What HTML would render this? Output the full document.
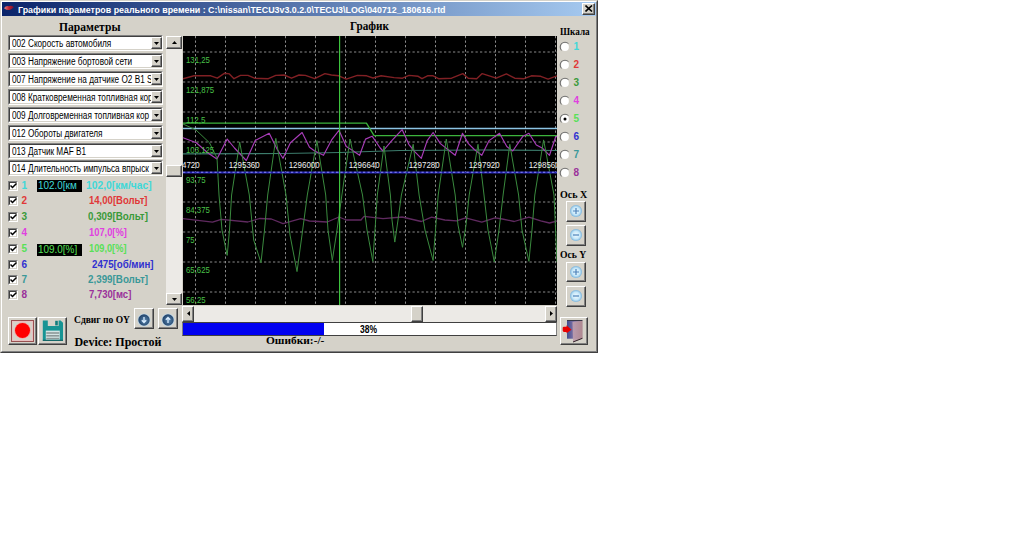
<!DOCTYPE html><html><head><meta charset="utf-8"><style>html,body{margin:0;padding:0;background:#fff;width:1024px;height:543px;overflow:hidden;position:relative;font-family:"Liberation Sans",sans-serif;}</style></head><body>
<div style="position:absolute;left:0;top:0;width:598px;height:353px;background:#d5d2c9;box-sizing:border-box;border-top:1px solid #d5d2c9;border-left:1px solid #d5d2c9;border-right:1px solid #404040;border-bottom:1px solid #404040;"><div style="position:absolute;left:0;top:0;right:0;bottom:0;border-top:1px solid #fff;border-left:1px solid #fff;border-right:1px solid #808080;border-bottom:1px solid #808080;"></div></div>
<div style="position:absolute;left:2px;top:2px;width:594px;height:14px;background:linear-gradient(to right,#0a246a,#a6caf0);"></div>
<svg style="position:absolute;left:0px;top:0px" width="16" height="16" viewBox="0 0 16 16"><defs><linearGradient id="tig" x1="0" x2="1"><stop offset="0" stop-color="#e88888"/><stop offset="0.5" stop-color="#c02030"/><stop offset="1" stop-color="#701030"/></linearGradient></defs><path d="M4 8.2 Q6 5.2 9 6.2 Q11.5 5.2 14 7.2 Q11.5 9.2 9.5 10 Q6.5 10.3 4 8.2 Z" fill="url(#tig)"/></svg>
<div style="position:absolute;left:18.3px;top:5.6px;white-space:pre;font:bold 9px 'Liberation Sans';line-height:1;color:#fff;transform:scaleX(0.9847961299239806);transform-origin:0 0;">Графики параметров реального времени : C:\nissan\TECU3v3.0.2.0\TECU3\LOG\040712_180616.rtd</div>
<div style="position:absolute;left:582px;top:3px;width:13px;height:12px;background:#d5d2c9;box-sizing:border-box;border-top:1px solid #fff;border-left:1px solid #fff;border-right:1px solid #404040;border-bottom:1px solid #404040;"><div style="position:absolute;left:0;top:0;right:0;bottom:0;border-right:1px solid #808080;border-bottom:1px solid #808080;"></div></div>
<svg style="position:absolute;left:585px;top:5px" width="8" height="7" viewBox="0 0 8 7"><path d="M0.5 0.5 L7 6.5 M7 0.5 L0.5 6.5" stroke="#000" stroke-width="1.6"/></svg>
<div style="position:absolute;left:59px;top:21.5px;white-space:pre;font:bold 11.5px 'Liberation Serif';line-height:1;color:#000;transform:scaleX(1.0081967213114753);transform-origin:0 0;">Параметры</div>
<div style="position:absolute;left:350.3px;top:21.2px;white-space:pre;font:bold 11.5px 'Liberation Serif';line-height:1;color:#000;transform:scaleX(0.975);transform-origin:0 0;">График</div>
<div style="position:absolute;left:560px;top:26px;white-space:pre;font:bold 11px 'Liberation Serif';line-height:1;color:#000;transform:scaleX(0.8338028169014085);transform-origin:0 0;">Шкала</div>
<div style="position:absolute;left:8px;top:35px;width:155px;height:16px;background:#fff;box-sizing:border-box;border-top:1px solid #808080;border-left:1px solid #808080;border-right:1px solid #fff;border-bottom:1px solid #fff;"><div style="position:absolute;left:0;top:0;right:0;bottom:0;border-top:1px solid #404040;border-left:1px solid #404040;border-right:1px solid #d5d2c9;border-bottom:1px solid #d5d2c9;"></div></div>
<div style="position:absolute;left:10px;top:37px;width:141px;height:12px;overflow:hidden;"><div style="position:absolute;left:2px;top:1.5px;white-space:pre;font:10px 'Liberation Sans';line-height:1;color:#000;transform:scaleX(0.82);transform-origin:0 0;">002 Скорость автомобиля</div></div>
<div style="position:absolute;left:151px;top:37px;width:11px;height:12px;background:#d5d2c9;box-sizing:border-box;border-top:1px solid #fff;border-left:1px solid #fff;border-right:1px solid #404040;border-bottom:1px solid #404040;"><div style="position:absolute;left:0;top:0;right:0;bottom:0;border-right:1px solid #808080;border-bottom:1px solid #808080;"></div></div>
<svg style="position:absolute;left:154px;top:41.5px" width="5" height="3" viewBox="0 0 5 3"><path d="M0 0 H5 L2.5 3 Z" fill="#000"/></svg>
<div style="position:absolute;left:8px;top:53px;width:155px;height:16px;background:#fff;box-sizing:border-box;border-top:1px solid #808080;border-left:1px solid #808080;border-right:1px solid #fff;border-bottom:1px solid #fff;"><div style="position:absolute;left:0;top:0;right:0;bottom:0;border-top:1px solid #404040;border-left:1px solid #404040;border-right:1px solid #d5d2c9;border-bottom:1px solid #d5d2c9;"></div></div>
<div style="position:absolute;left:10px;top:55px;width:141px;height:12px;overflow:hidden;"><div style="position:absolute;left:2px;top:1.5px;white-space:pre;font:10px 'Liberation Sans';line-height:1;color:#000;transform:scaleX(0.82);transform-origin:0 0;">003 Напряжение бортовой сети</div></div>
<div style="position:absolute;left:151px;top:55px;width:11px;height:12px;background:#d5d2c9;box-sizing:border-box;border-top:1px solid #fff;border-left:1px solid #fff;border-right:1px solid #404040;border-bottom:1px solid #404040;"><div style="position:absolute;left:0;top:0;right:0;bottom:0;border-right:1px solid #808080;border-bottom:1px solid #808080;"></div></div>
<svg style="position:absolute;left:154px;top:59.5px" width="5" height="3" viewBox="0 0 5 3"><path d="M0 0 H5 L2.5 3 Z" fill="#000"/></svg>
<div style="position:absolute;left:8px;top:71px;width:155px;height:16px;background:#fff;box-sizing:border-box;border-top:1px solid #808080;border-left:1px solid #808080;border-right:1px solid #fff;border-bottom:1px solid #fff;"><div style="position:absolute;left:0;top:0;right:0;bottom:0;border-top:1px solid #404040;border-left:1px solid #404040;border-right:1px solid #d5d2c9;border-bottom:1px solid #d5d2c9;"></div></div>
<div style="position:absolute;left:10px;top:73px;width:141px;height:12px;overflow:hidden;"><div style="position:absolute;left:2px;top:1.5px;white-space:pre;font:10px 'Liberation Sans';line-height:1;color:#000;transform:scaleX(0.82);transform-origin:0 0;">007 Напряжение на датчике O2 B1 S</div></div>
<div style="position:absolute;left:151px;top:73px;width:11px;height:12px;background:#d5d2c9;box-sizing:border-box;border-top:1px solid #fff;border-left:1px solid #fff;border-right:1px solid #404040;border-bottom:1px solid #404040;"><div style="position:absolute;left:0;top:0;right:0;bottom:0;border-right:1px solid #808080;border-bottom:1px solid #808080;"></div></div>
<svg style="position:absolute;left:154px;top:77.5px" width="5" height="3" viewBox="0 0 5 3"><path d="M0 0 H5 L2.5 3 Z" fill="#000"/></svg>
<div style="position:absolute;left:8px;top:89px;width:155px;height:16px;background:#fff;box-sizing:border-box;border-top:1px solid #808080;border-left:1px solid #808080;border-right:1px solid #fff;border-bottom:1px solid #fff;"><div style="position:absolute;left:0;top:0;right:0;bottom:0;border-top:1px solid #404040;border-left:1px solid #404040;border-right:1px solid #d5d2c9;border-bottom:1px solid #d5d2c9;"></div></div>
<div style="position:absolute;left:10px;top:91px;width:141px;height:12px;overflow:hidden;"><div style="position:absolute;left:2px;top:1.5px;white-space:pre;font:10px 'Liberation Sans';line-height:1;color:#000;transform:scaleX(0.82);transform-origin:0 0;">008 Кратковременная топливная кор</div></div>
<div style="position:absolute;left:151px;top:91px;width:11px;height:12px;background:#d5d2c9;box-sizing:border-box;border-top:1px solid #fff;border-left:1px solid #fff;border-right:1px solid #404040;border-bottom:1px solid #404040;"><div style="position:absolute;left:0;top:0;right:0;bottom:0;border-right:1px solid #808080;border-bottom:1px solid #808080;"></div></div>
<svg style="position:absolute;left:154px;top:95.5px" width="5" height="3" viewBox="0 0 5 3"><path d="M0 0 H5 L2.5 3 Z" fill="#000"/></svg>
<div style="position:absolute;left:8px;top:107px;width:155px;height:16px;background:#fff;box-sizing:border-box;border-top:1px solid #808080;border-left:1px solid #808080;border-right:1px solid #fff;border-bottom:1px solid #fff;"><div style="position:absolute;left:0;top:0;right:0;bottom:0;border-top:1px solid #404040;border-left:1px solid #404040;border-right:1px solid #d5d2c9;border-bottom:1px solid #d5d2c9;"></div></div>
<div style="position:absolute;left:10px;top:109px;width:141px;height:12px;overflow:hidden;"><div style="position:absolute;left:2px;top:1.5px;white-space:pre;font:10px 'Liberation Sans';line-height:1;color:#000;transform:scaleX(0.82);transform-origin:0 0;">009 Долговременная топливная кор</div></div>
<div style="position:absolute;left:151px;top:109px;width:11px;height:12px;background:#d5d2c9;box-sizing:border-box;border-top:1px solid #fff;border-left:1px solid #fff;border-right:1px solid #404040;border-bottom:1px solid #404040;"><div style="position:absolute;left:0;top:0;right:0;bottom:0;border-right:1px solid #808080;border-bottom:1px solid #808080;"></div></div>
<svg style="position:absolute;left:154px;top:113.5px" width="5" height="3" viewBox="0 0 5 3"><path d="M0 0 H5 L2.5 3 Z" fill="#000"/></svg>
<div style="position:absolute;left:8px;top:125px;width:155px;height:16px;background:#fff;box-sizing:border-box;border-top:1px solid #808080;border-left:1px solid #808080;border-right:1px solid #fff;border-bottom:1px solid #fff;"><div style="position:absolute;left:0;top:0;right:0;bottom:0;border-top:1px solid #404040;border-left:1px solid #404040;border-right:1px solid #d5d2c9;border-bottom:1px solid #d5d2c9;"></div></div>
<div style="position:absolute;left:10px;top:127px;width:141px;height:12px;overflow:hidden;"><div style="position:absolute;left:2px;top:1.5px;white-space:pre;font:10px 'Liberation Sans';line-height:1;color:#000;transform:scaleX(0.82);transform-origin:0 0;">012 Обороты двигателя</div></div>
<div style="position:absolute;left:151px;top:127px;width:11px;height:12px;background:#d5d2c9;box-sizing:border-box;border-top:1px solid #fff;border-left:1px solid #fff;border-right:1px solid #404040;border-bottom:1px solid #404040;"><div style="position:absolute;left:0;top:0;right:0;bottom:0;border-right:1px solid #808080;border-bottom:1px solid #808080;"></div></div>
<svg style="position:absolute;left:154px;top:131.5px" width="5" height="3" viewBox="0 0 5 3"><path d="M0 0 H5 L2.5 3 Z" fill="#000"/></svg>
<div style="position:absolute;left:8px;top:143px;width:155px;height:16px;background:#fff;box-sizing:border-box;border-top:1px solid #808080;border-left:1px solid #808080;border-right:1px solid #fff;border-bottom:1px solid #fff;"><div style="position:absolute;left:0;top:0;right:0;bottom:0;border-top:1px solid #404040;border-left:1px solid #404040;border-right:1px solid #d5d2c9;border-bottom:1px solid #d5d2c9;"></div></div>
<div style="position:absolute;left:10px;top:145px;width:141px;height:12px;overflow:hidden;"><div style="position:absolute;left:2px;top:1.5px;white-space:pre;font:10px 'Liberation Sans';line-height:1;color:#000;transform:scaleX(0.82);transform-origin:0 0;">013 Датчик MAF B1</div></div>
<div style="position:absolute;left:151px;top:145px;width:11px;height:12px;background:#d5d2c9;box-sizing:border-box;border-top:1px solid #fff;border-left:1px solid #fff;border-right:1px solid #404040;border-bottom:1px solid #404040;"><div style="position:absolute;left:0;top:0;right:0;bottom:0;border-right:1px solid #808080;border-bottom:1px solid #808080;"></div></div>
<svg style="position:absolute;left:154px;top:149.5px" width="5" height="3" viewBox="0 0 5 3"><path d="M0 0 H5 L2.5 3 Z" fill="#000"/></svg>
<div style="position:absolute;left:8px;top:160px;width:155px;height:16px;background:#fff;box-sizing:border-box;border-top:1px solid #808080;border-left:1px solid #808080;border-right:1px solid #fff;border-bottom:1px solid #fff;"><div style="position:absolute;left:0;top:0;right:0;bottom:0;border-top:1px solid #404040;border-left:1px solid #404040;border-right:1px solid #d5d2c9;border-bottom:1px solid #d5d2c9;"></div></div>
<div style="position:absolute;left:10px;top:162px;width:141px;height:12px;overflow:hidden;"><div style="position:absolute;left:2px;top:1.5px;white-space:pre;font:10px 'Liberation Sans';line-height:1;color:#000;transform:scaleX(0.82);transform-origin:0 0;">014 Длительность импульса впрыск</div></div>
<div style="position:absolute;left:151px;top:162px;width:11px;height:12px;background:#d5d2c9;box-sizing:border-box;border-top:1px solid #fff;border-left:1px solid #fff;border-right:1px solid #404040;border-bottom:1px solid #404040;"><div style="position:absolute;left:0;top:0;right:0;bottom:0;border-right:1px solid #808080;border-bottom:1px solid #808080;"></div></div>
<svg style="position:absolute;left:154px;top:166.5px" width="5" height="3" viewBox="0 0 5 3"><path d="M0 0 H5 L2.5 3 Z" fill="#000"/></svg>
<div style="position:absolute;left:166px;top:36px;width:16px;height:269px;background:#eceae6;"></div>
<div style="position:absolute;left:166px;top:36px;width:16px;height:13px;background:#d5d2c9;box-sizing:border-box;border-top:1px solid #fff;border-left:1px solid #fff;border-right:1px solid #404040;border-bottom:1px solid #404040;"><div style="position:absolute;left:0;top:0;right:0;bottom:0;border-right:1px solid #808080;border-bottom:1px solid #808080;"></div></div>
<svg style="position:absolute;left:171.5px;top:41px" width="5" height="3" viewBox="0 0 5 3"><path d="M0 3 H5 L2.5 0 Z" fill="#000"/></svg>
<div style="position:absolute;left:166px;top:165px;width:16px;height:12px;background:#d5d2c9;box-sizing:border-box;border-top:1px solid #fff;border-left:1px solid #fff;border-right:1px solid #404040;border-bottom:1px solid #404040;"><div style="position:absolute;left:0;top:0;right:0;bottom:0;border-right:1px solid #808080;border-bottom:1px solid #808080;"></div></div>
<div style="position:absolute;left:166px;top:293px;width:16px;height:12px;background:#d5d2c9;box-sizing:border-box;border-top:1px solid #fff;border-left:1px solid #fff;border-right:1px solid #404040;border-bottom:1px solid #404040;"><div style="position:absolute;left:0;top:0;right:0;bottom:0;border-right:1px solid #808080;border-bottom:1px solid #808080;"></div></div>
<svg style="position:absolute;left:171.5px;top:298px" width="5" height="3" viewBox="0 0 5 3"><path d="M0 0 H5 L2.5 3 Z" fill="#000"/></svg>
<div style="position:absolute;left:8px;top:181px;width:10px;height:10px;background:#fff;box-sizing:border-box;border-top:1px solid #808080;border-left:1px solid #808080;border-right:1px solid #fff;border-bottom:1px solid #fff;"><div style="position:absolute;left:0;top:0;right:0;bottom:0;border-top:1px solid #404040;border-left:1px solid #404040;border-right:1px solid #d5d2c9;border-bottom:1px solid #d5d2c9;"></div></div>
<svg style="position:absolute;left:10px;top:183px" width="7" height="6" viewBox="0 0 7 6"><path d="M0.5 2.5 L2.5 4.5 L6.5 0.5" stroke="#000" stroke-width="1.5" fill="none"/></svg>
<div style="position:absolute;left:21.5px;top:180.8px;white-space:pre;font:bold 10px 'Liberation Sans';line-height:1;color:#40d8d8;">1</div>
<div style="position:absolute;left:37px;top:180px;width:45px;height:12px;background:#000;"></div>
<div style="position:absolute;left:38px;top:181px;white-space:pre;font:10px 'Liberation Sans';line-height:1;color:#40d8d8;transform:scaleX(0.9923664122137406);transform-origin:0 0;">102.0[км</div>
<div style="position:absolute;left:86.1px;top:180.8px;white-space:pre;font:bold 10px 'Liberation Sans';line-height:1;color:#40d8d8;transform:scaleX(1.0282131661442009);transform-origin:0 0;">102,0[км/час]</div>
<div style="position:absolute;left:8px;top:196px;width:10px;height:10px;background:#fff;box-sizing:border-box;border-top:1px solid #808080;border-left:1px solid #808080;border-right:1px solid #fff;border-bottom:1px solid #fff;"><div style="position:absolute;left:0;top:0;right:0;bottom:0;border-top:1px solid #404040;border-left:1px solid #404040;border-right:1px solid #d5d2c9;border-bottom:1px solid #d5d2c9;"></div></div>
<svg style="position:absolute;left:10px;top:198px" width="7" height="6" viewBox="0 0 7 6"><path d="M0.5 2.5 L2.5 4.5 L6.5 0.5" stroke="#000" stroke-width="1.5" fill="none"/></svg>
<div style="position:absolute;left:21.5px;top:196.3px;white-space:pre;font:bold 10px 'Liberation Sans';line-height:1;color:#e03838;">2</div>
<div style="position:absolute;left:88.7px;top:196.3px;white-space:pre;font:bold 10px 'Liberation Sans';line-height:1;color:#e03838;transform:scaleX(0.9543230016313214);transform-origin:0 0;">14,00[Вольт]</div>
<div style="position:absolute;left:8px;top:212px;width:10px;height:10px;background:#fff;box-sizing:border-box;border-top:1px solid #808080;border-left:1px solid #808080;border-right:1px solid #fff;border-bottom:1px solid #fff;"><div style="position:absolute;left:0;top:0;right:0;bottom:0;border-top:1px solid #404040;border-left:1px solid #404040;border-right:1px solid #d5d2c9;border-bottom:1px solid #d5d2c9;"></div></div>
<svg style="position:absolute;left:10px;top:214px" width="7" height="6" viewBox="0 0 7 6"><path d="M0.5 2.5 L2.5 4.5 L6.5 0.5" stroke="#000" stroke-width="1.5" fill="none"/></svg>
<div style="position:absolute;left:21.5px;top:211.8px;white-space:pre;font:bold 10px 'Liberation Sans';line-height:1;color:#3a9a3a;">3</div>
<div style="position:absolute;left:88.0px;top:211.8px;white-space:pre;font:bold 10px 'Liberation Sans';line-height:1;color:#3a9a3a;transform:scaleX(0.9771615008156606);transform-origin:0 0;">0,309[Вольт]</div>
<div style="position:absolute;left:8px;top:228px;width:10px;height:10px;background:#fff;box-sizing:border-box;border-top:1px solid #808080;border-left:1px solid #808080;border-right:1px solid #fff;border-bottom:1px solid #fff;"><div style="position:absolute;left:0;top:0;right:0;bottom:0;border-top:1px solid #404040;border-left:1px solid #404040;border-right:1px solid #d5d2c9;border-bottom:1px solid #d5d2c9;"></div></div>
<svg style="position:absolute;left:10px;top:230px" width="7" height="6" viewBox="0 0 7 6"><path d="M0.5 2.5 L2.5 4.5 L6.5 0.5" stroke="#000" stroke-width="1.5" fill="none"/></svg>
<div style="position:absolute;left:21.5px;top:227.8px;white-space:pre;font:bold 10px 'Liberation Sans';line-height:1;color:#e040e0;">4</div>
<div style="position:absolute;left:88.7px;top:227.8px;white-space:pre;font:bold 10px 'Liberation Sans';line-height:1;color:#e040e0;transform:scaleX(0.933497536945813);transform-origin:0 0;">107,0[%]</div>
<div style="position:absolute;left:8px;top:244px;width:10px;height:10px;background:#fff;box-sizing:border-box;border-top:1px solid #808080;border-left:1px solid #808080;border-right:1px solid #fff;border-bottom:1px solid #fff;"><div style="position:absolute;left:0;top:0;right:0;bottom:0;border-top:1px solid #404040;border-left:1px solid #404040;border-right:1px solid #d5d2c9;border-bottom:1px solid #d5d2c9;"></div></div>
<svg style="position:absolute;left:10px;top:246px" width="7" height="6" viewBox="0 0 7 6"><path d="M0.5 2.5 L2.5 4.5 L6.5 0.5" stroke="#000" stroke-width="1.5" fill="none"/></svg>
<div style="position:absolute;left:21.5px;top:244.3px;white-space:pre;font:bold 10px 'Liberation Sans';line-height:1;color:#58e058;">5</div>
<div style="position:absolute;left:37px;top:244px;width:45px;height:12px;background:#000;"></div>
<div style="position:absolute;left:38px;top:244.5px;white-space:pre;font:10px 'Liberation Sans';line-height:1;color:#58e058;transform:scaleX(0.9923664122137406);transform-origin:0 0;">109.0[%]</div>
<div style="position:absolute;left:89.0px;top:244.3px;white-space:pre;font:bold 10px 'Liberation Sans';line-height:1;color:#58e058;transform:scaleX(0.9236453201970443);transform-origin:0 0;">109,0[%]</div>
<div style="position:absolute;left:8px;top:260px;width:10px;height:10px;background:#fff;box-sizing:border-box;border-top:1px solid #808080;border-left:1px solid #808080;border-right:1px solid #fff;border-bottom:1px solid #fff;"><div style="position:absolute;left:0;top:0;right:0;bottom:0;border-top:1px solid #404040;border-left:1px solid #404040;border-right:1px solid #d5d2c9;border-bottom:1px solid #d5d2c9;"></div></div>
<svg style="position:absolute;left:10px;top:262px" width="7" height="6" viewBox="0 0 7 6"><path d="M0.5 2.5 L2.5 4.5 L6.5 0.5" stroke="#000" stroke-width="1.5" fill="none"/></svg>
<div style="position:absolute;left:21.5px;top:259.8px;white-space:pre;font:bold 10px 'Liberation Sans';line-height:1;color:#3030d0;">6</div>
<div style="position:absolute;left:91.5px;top:259.8px;white-space:pre;font:bold 10px 'Liberation Sans';line-height:1;color:#3030d0;transform:scaleX(0.968553459119497);transform-origin:0 0;">2475[об/мин]</div>
<div style="position:absolute;left:8px;top:275px;width:10px;height:10px;background:#fff;box-sizing:border-box;border-top:1px solid #808080;border-left:1px solid #808080;border-right:1px solid #fff;border-bottom:1px solid #fff;"><div style="position:absolute;left:0;top:0;right:0;bottom:0;border-top:1px solid #404040;border-left:1px solid #404040;border-right:1px solid #d5d2c9;border-bottom:1px solid #d5d2c9;"></div></div>
<svg style="position:absolute;left:10px;top:277px" width="7" height="6" viewBox="0 0 7 6"><path d="M0.5 2.5 L2.5 4.5 L6.5 0.5" stroke="#000" stroke-width="1.5" fill="none"/></svg>
<div style="position:absolute;left:21.5px;top:275.1px;white-space:pre;font:bold 10px 'Liberation Sans';line-height:1;color:#3a9898;">7</div>
<div style="position:absolute;left:88.2px;top:275.1px;white-space:pre;font:bold 10px 'Liberation Sans';line-height:1;color:#3a9898;transform:scaleX(0.9804241435562805);transform-origin:0 0;">2,399[Вольт]</div>
<div style="position:absolute;left:8px;top:290px;width:10px;height:10px;background:#fff;box-sizing:border-box;border-top:1px solid #808080;border-left:1px solid #808080;border-right:1px solid #fff;border-bottom:1px solid #fff;"><div style="position:absolute;left:0;top:0;right:0;bottom:0;border-top:1px solid #404040;border-left:1px solid #404040;border-right:1px solid #d5d2c9;border-bottom:1px solid #d5d2c9;"></div></div>
<svg style="position:absolute;left:10px;top:292px" width="7" height="6" viewBox="0 0 7 6"><path d="M0.5 2.5 L2.5 4.5 L6.5 0.5" stroke="#000" stroke-width="1.5" fill="none"/></svg>
<div style="position:absolute;left:21.5px;top:290.3px;white-space:pre;font:bold 10px 'Liberation Sans';line-height:1;color:#9a309a;">8</div>
<div style="position:absolute;left:89.0px;top:290.3px;white-space:pre;font:bold 10px 'Liberation Sans';line-height:1;color:#9a309a;transform:scaleX(0.9505617977528089);transform-origin:0 0;">7,730[мс]</div>
<div style="position:absolute;left:8px;top:317px;width:29px;height:28px;background:#d5d2c9;box-sizing:border-box;border-top:1px solid #fff;border-left:1px solid #fff;border-right:1px solid #404040;border-bottom:1px solid #404040;"><div style="position:absolute;left:0;top:0;right:0;bottom:0;border-right:1px solid #808080;border-bottom:1px solid #808080;"></div></div>
<div style="position:absolute;left:11px;top:319.5px;width:23px;height:22.5px;box-sizing:border-box;border:1px solid #985050;box-shadow:inset 0 0 0 1px #e8c0c0;"></div>
<div style="position:absolute;left:15px;top:323px;width:15px;height:15px;border-radius:50%;background:#f00;box-shadow:0 0 0 0.8px #f8a0a0;"></div>
<div style="position:absolute;left:38px;top:317px;width:29px;height:28px;background:#d5d2c9;box-sizing:border-box;border-top:1px solid #fff;border-left:1px solid #fff;border-right:1px solid #404040;border-bottom:1px solid #404040;"><div style="position:absolute;left:0;top:0;right:0;bottom:0;border-right:1px solid #808080;border-bottom:1px solid #808080;"></div></div>
<svg style="position:absolute;left:42px;top:320px" width="22" height="22" viewBox="0 0 22 22"><path d="M0.8 0.4 H5.8 V6 H16.6 V0.4 H18.6 L21 2.8 V20.8 H0.8 Z" fill="#179494"/><rect x="13.2" y="0.8" width="2.6" height="4.6" fill="#107c7c"/><rect x="3.8" y="10.6" width="14" height="9.2" fill="#d4e4e4"/><rect x="4.3" y="12.2" width="13" height="1.6" fill="#8c9898"/><rect x="4.3" y="15.0" width="13" height="1.6" fill="#8c9898"/><rect x="4.3" y="17.8" width="13" height="1.4" fill="#8c9898"/><rect x="0.8" y="19.8" width="20.2" height="1" fill="#0a5a5a"/></svg>
<div style="position:absolute;left:74.4px;top:314.5px;white-space:pre;font:bold 10px 'Liberation Serif';line-height:1;color:#000;transform:scaleX(0.9523809523809524);transform-origin:0 0;">Сдвиг по OY</div>
<div style="position:absolute;left:74.4px;top:335.5px;white-space:pre;font:bold 12px 'Liberation Serif';line-height:1;color:#000;">Device: Простой</div>
<div style="position:absolute;left:134px;top:308px;width:20px;height:21px;background:#d5d2c9;box-sizing:border-box;border-top:1px solid #fff;border-left:1px solid #fff;border-right:1px solid #404040;border-bottom:1px solid #404040;"><div style="position:absolute;left:0;top:0;right:0;bottom:0;border-right:1px solid #808080;border-bottom:1px solid #808080;"></div></div>
<svg style="position:absolute;left:137px;top:312.5px" width="14" height="14" viewBox="-7 -7 14 14"><defs><radialGradient id="gdown144" cx="0.55" cy="0.55" r="0.6"><stop offset="0" stop-color="#5a88b0"/><stop offset="1" stop-color="#1a3a62"/></radialGradient></defs><circle cx="0" cy="0" r="6.6" fill="#c4d8e4"/><circle cx="0" cy="0" r="5.7" fill="url(#gdown144)"/><path d="M0 -3 V2.5 M-2.2 0.3 L0 2.5 L2.2 0.3" stroke="#d8ecff" stroke-width="1.3" fill="none"/></svg>
<div style="position:absolute;left:158px;top:308px;width:20px;height:21px;background:#d5d2c9;box-sizing:border-box;border-top:1px solid #fff;border-left:1px solid #fff;border-right:1px solid #404040;border-bottom:1px solid #404040;"><div style="position:absolute;left:0;top:0;right:0;bottom:0;border-right:1px solid #808080;border-bottom:1px solid #808080;"></div></div>
<svg style="position:absolute;left:161px;top:312.5px" width="14" height="14" viewBox="-7 -7 14 14"><defs><radialGradient id="gup168" cx="0.55" cy="0.55" r="0.6"><stop offset="0" stop-color="#5a88b0"/><stop offset="1" stop-color="#1a3a62"/></radialGradient></defs><circle cx="0" cy="0" r="6.6" fill="#c4d8e4"/><circle cx="0" cy="0" r="5.7" fill="url(#gup168)"/><path d="M0 3 V-2.5 M-2.2 -0.3 L0 -2.5 L2.2 -0.3" stroke="#d8ecff" stroke-width="1.3" fill="none"/></svg>
<svg style="position:absolute;left:183px;top:36px" width="374" height="269" viewBox="183 36 374 269"><rect x="183" y="36" width="374" height="269" fill="#000"/><line x1="183" y1="52" x2="557" y2="52" stroke="#8a8a8a" stroke-width="1" stroke-dasharray="2.25 2.25"/><line x1="183" y1="82" x2="557" y2="82" stroke="#8a8a8a" stroke-width="1" stroke-dasharray="2.25 2.25"/><line x1="183" y1="112" x2="557" y2="112" stroke="#8a8a8a" stroke-width="1" stroke-dasharray="2.25 2.25"/><line x1="183" y1="142" x2="557" y2="142" stroke="#8a8a8a" stroke-width="1" stroke-dasharray="2.25 2.25"/><line x1="183" y1="172" x2="557" y2="172" stroke="#8a8a8a" stroke-width="1" stroke-dasharray="2.25 2.25"/><line x1="183" y1="202" x2="557" y2="202" stroke="#8a8a8a" stroke-width="1" stroke-dasharray="2.25 2.25"/><line x1="183" y1="232" x2="557" y2="232" stroke="#8a8a8a" stroke-width="1" stroke-dasharray="2.25 2.25"/><line x1="183" y1="262" x2="557" y2="262" stroke="#8a8a8a" stroke-width="1" stroke-dasharray="2.25 2.25"/><line x1="183" y1="292" x2="557" y2="292" stroke="#8a8a8a" stroke-width="1" stroke-dasharray="2.25 2.25"/><line x1="195.5" y1="36" x2="195.5" y2="305" stroke="#8a8a8a" stroke-width="1" stroke-dasharray="2.25 2.25"/><line x1="225.5" y1="36" x2="225.5" y2="305" stroke="#8a8a8a" stroke-width="1" stroke-dasharray="2.25 2.25"/><line x1="255.5" y1="36" x2="255.5" y2="305" stroke="#8a8a8a" stroke-width="1" stroke-dasharray="2.25 2.25"/><line x1="285.5" y1="36" x2="285.5" y2="305" stroke="#8a8a8a" stroke-width="1" stroke-dasharray="2.25 2.25"/><line x1="315.5" y1="36" x2="315.5" y2="305" stroke="#8a8a8a" stroke-width="1" stroke-dasharray="2.25 2.25"/><line x1="345.5" y1="36" x2="345.5" y2="305" stroke="#8a8a8a" stroke-width="1" stroke-dasharray="2.25 2.25"/><line x1="375.5" y1="36" x2="375.5" y2="305" stroke="#8a8a8a" stroke-width="1" stroke-dasharray="2.25 2.25"/><line x1="405.5" y1="36" x2="405.5" y2="305" stroke="#8a8a8a" stroke-width="1" stroke-dasharray="2.25 2.25"/><line x1="435.5" y1="36" x2="435.5" y2="305" stroke="#8a8a8a" stroke-width="1" stroke-dasharray="2.25 2.25"/><line x1="465.5" y1="36" x2="465.5" y2="305" stroke="#8a8a8a" stroke-width="1" stroke-dasharray="2.25 2.25"/><line x1="495.5" y1="36" x2="495.5" y2="305" stroke="#8a8a8a" stroke-width="1" stroke-dasharray="2.25 2.25"/><line x1="525.5" y1="36" x2="525.5" y2="305" stroke="#8a8a8a" stroke-width="1" stroke-dasharray="2.25 2.25"/><line x1="555.5" y1="36" x2="555.5" y2="305" stroke="#8a8a8a" stroke-width="1" stroke-dasharray="2.25 2.25"/><polyline points="183.0,78.7 194.1,75.8 210.8,75.8 217.3,78.2 224.7,73.2 229.4,73.9 234.0,78.7 240.5,75.4 248.0,75.4 254.4,78.2 268.3,78.7 275.8,75.4 284.1,75.0 291.5,78.2 299.0,75.0 305.4,75.4 314.7,78.7 324.9,73.6 331.4,75.0 338.8,75.8 346.3,79.1 357.4,75.4 366.7,75.8 373.0,78.0 381.1,75.8 394.1,77.6 402.5,78.2 409.0,75.4 418.2,76.3 422.0,78.7 427.5,75.8 433.1,75.8 438.6,78.7 451.6,78.2 462.8,73.6 468.3,78.2 476.7,78.7 482.2,73.6 496.2,78.2 506.4,73.9 514.7,78.2 524.0,78.7 531.4,75.8 540.7,76.3 548.1,79.1 557.0,75.8" stroke="#802024" stroke-width="1.4" fill="none" stroke-linejoin="round"/><polyline points="183.0,218.6 212.5,222.2 221.3,219.3 247.8,222.0 259.6,218.5 271.4,219.0 283.0,223.7 300.7,218.6 309.5,221.0 327.2,222.0 339.0,217.0 346.3,220.0 361.0,220.0 364.0,216.4 383.0,218.6 402.1,217.0 421.3,221.5 431.6,217.1 444.9,220.0 456.6,220.8 465.5,217.8 481.8,222.2 495.0,217.8 502.4,219.0 514.2,221.5 528.9,217.1 540.7,220.8 549.5,223.0 557.0,221.0" stroke="#602a60" stroke-width="1.3" fill="none" stroke-linejoin="round"/><polyline points="183.0,153.9 283.0,153.5 340.0,152.5 400.0,150.5 483.0,150.0 557.0,150.5" stroke="#3c7c6c" stroke-width="1.2" fill="none" stroke-linejoin="round"/><polyline points="183.0,128.5 557.0,128.5" stroke="#8cc4e4" stroke-width="1.4" fill="none" stroke-linejoin="round"/><polyline points="183.0,123.2 366.4,123.2 374.1,135.6 557.0,135.6" stroke="#3cb43c" stroke-width="1.3" fill="none" stroke-linejoin="round"/><polyline points="183.0,137.7 196.3,142.8 208.0,153.0 216.9,159.0 227.2,139.1 234.5,148.0 246.3,160.5 255.2,140.6 269.2,133.3 277.3,149.5 283.0,158.3 290.4,142.8 302.1,132.5 309.5,147.2 314.7,151.0 323.5,155.3 331.6,139.9 339.0,130.3 346.3,146.5 352.2,150.2 359.6,155.3 365.5,139.1 372.1,136.2 380.2,148.0 383.0,151.0 391.8,140.6 402.1,129.6 408.8,144.3 414.7,151.7 421.3,158.3 427.2,140.6 433.1,132.5 440.4,143.6 447.8,149.5 455.2,155.3 462.5,133.3 468.4,143.6 474.3,149.5 481.8,155.3 489.1,140.6 499.5,133.3 506.8,146.5 512.7,151.0 523.0,136.2 528.9,133.3 536.3,145.0 542.2,148.0 549.5,155.3 555.4,137.7 557.0,136.0" stroke="#a83cb8" stroke-width="1.15" fill="none" stroke-linejoin="round"/><polyline points="183.0,124.0 196.0,130.0 209.5,142.8 217.0,158.0 219.0,195.0 222.0,230.0 227.2,255.4 229.5,230.0 231.6,195.0 239.7,142.0 249.3,195.0 253.7,240.0 261.0,262.7 264.5,230.0 267.7,195.0 275.8,138.4 286.0,195.0 290.0,235.0 297.0,271.6 302.0,235.0 307.3,195.0 316.9,140.6 325.7,195.0 328.0,230.0 332.3,260.5 337.0,230.0 341.9,195.0 350.0,139.0 362.5,195.0 367.0,230.0 372.8,261.3 375.0,230.0 377.3,195.0 384.0,146.0 390.4,195.0 392.0,220.0 394.8,242.1 398.0,220.0 401.4,195.0 413.2,144.3 419.1,195.0 425.0,230.0 433.1,260.5 435.5,230.0 438.2,195.0 446.3,139.0 455.2,195.0 458.0,225.0 462.5,247.3 466.0,225.0 469.2,195.0 478.0,144.3 484.0,195.0 488.0,230.0 494.3,262.0 499.0,230.0 503.1,195.0 509.8,144.3 518.6,195.0 522.0,230.0 528.9,261.3 532.0,230.0 534.8,195.0 543.6,139.9 554.0,195.0 556.0,240.0 557.0,262.0" stroke="#3a8a3e" stroke-width="1.0" fill="none" stroke-linejoin="round"/><line x1="183" y1="172.5" x2="557" y2="172.5" stroke="#2424b0" stroke-width="2.2"/><line x1="183" y1="172.5" x2="557" y2="172.5" stroke="#7070e8" stroke-width="1" stroke-dasharray="2.25 2.25"/><line x1="339.6" y1="36" x2="339.6" y2="305" stroke="#40c840" stroke-width="1.15"/><text x="186" y="62.9" font-family="Liberation Sans" font-size="8.7" fill="#48c048" textLength="23.9" lengthAdjust="spacingAndGlyphs">131,25</text><text x="186" y="92.9" font-family="Liberation Sans" font-size="8.7" fill="#48c048" textLength="28.2" lengthAdjust="spacingAndGlyphs">121,875</text><text x="186" y="122.9" font-family="Liberation Sans" font-size="8.7" fill="#48c048" textLength="19.6" lengthAdjust="spacingAndGlyphs">112,5</text><text x="186" y="152.9" font-family="Liberation Sans" font-size="8.7" fill="#48c048" textLength="28.2" lengthAdjust="spacingAndGlyphs">103,125</text><text x="186" y="182.9" font-family="Liberation Sans" font-size="8.7" fill="#48c048" textLength="19.6" lengthAdjust="spacingAndGlyphs">93,75</text><text x="186" y="212.9" font-family="Liberation Sans" font-size="8.7" fill="#48c048" textLength="23.9" lengthAdjust="spacingAndGlyphs">84,375</text><text x="186" y="242.9" font-family="Liberation Sans" font-size="8.7" fill="#48c048" textLength="8.6" lengthAdjust="spacingAndGlyphs">75</text><text x="186" y="272.9" font-family="Liberation Sans" font-size="8.7" fill="#48c048" textLength="23.9" lengthAdjust="spacingAndGlyphs">65,625</text><text x="186" y="302.9" font-family="Liberation Sans" font-size="8.7" fill="#48c048" textLength="19.6" lengthAdjust="spacingAndGlyphs">56,25</text><text x="168.7" y="167.9" font-family="Liberation Sans" font-size="9" fill="#f0f0f0" textLength="31" lengthAdjust="spacingAndGlyphs">1294720</text><text x="228.7" y="167.9" font-family="Liberation Sans" font-size="9" fill="#f0f0f0" textLength="31" lengthAdjust="spacingAndGlyphs">1295360</text><text x="288.7" y="167.9" font-family="Liberation Sans" font-size="9" fill="#f0f0f0" textLength="31" lengthAdjust="spacingAndGlyphs">1296000</text><text x="348.7" y="167.9" font-family="Liberation Sans" font-size="9" fill="#f0f0f0" textLength="31" lengthAdjust="spacingAndGlyphs">1296640</text><text x="408.7" y="167.9" font-family="Liberation Sans" font-size="9" fill="#f0f0f0" textLength="31" lengthAdjust="spacingAndGlyphs">1297280</text><text x="468.7" y="167.9" font-family="Liberation Sans" font-size="9" fill="#f0f0f0" textLength="31" lengthAdjust="spacingAndGlyphs">1297920</text><text x="528.7" y="167.9" font-family="Liberation Sans" font-size="9" fill="#f0f0f0" textLength="31" lengthAdjust="spacingAndGlyphs">1298560</text></svg>
<div style="position:absolute;left:182px;top:306px;width:375px;height:16px;background:#eceae6;"></div>
<div style="position:absolute;left:182px;top:306px;width:12px;height:16px;background:#d5d2c9;box-sizing:border-box;border-top:1px solid #fff;border-left:1px solid #fff;border-right:1px solid #404040;border-bottom:1px solid #404040;"><div style="position:absolute;left:0;top:0;right:0;bottom:0;border-right:1px solid #808080;border-bottom:1px solid #808080;"></div></div>
<svg style="position:absolute;left:186.5px;top:311px" width="3" height="5" viewBox="0 0 3 5"><path d="M3 0 V5 L0 2.5 Z" fill="#000"/></svg>
<div style="position:absolute;left:411px;top:306px;width:12px;height:16px;background:#d5d2c9;box-sizing:border-box;border-top:1px solid #fff;border-left:1px solid #fff;border-right:1px solid #404040;border-bottom:1px solid #404040;"><div style="position:absolute;left:0;top:0;right:0;bottom:0;border-right:1px solid #808080;border-bottom:1px solid #808080;"></div></div>
<div style="position:absolute;left:545px;top:306px;width:12px;height:16px;background:#d5d2c9;box-sizing:border-box;border-top:1px solid #fff;border-left:1px solid #fff;border-right:1px solid #404040;border-bottom:1px solid #404040;"><div style="position:absolute;left:0;top:0;right:0;bottom:0;border-right:1px solid #808080;border-bottom:1px solid #808080;"></div></div>
<svg style="position:absolute;left:549.5px;top:311px" width="3" height="5" viewBox="0 0 3 5"><path d="M0 0 V5 L3 2.5 Z" fill="#000"/></svg>
<div style="position:absolute;left:182px;top:322px;width:375px;height:14px;background:#fff;box-sizing:border-box;border-top:1px solid #404040;border-left:1px solid #808080;border-bottom:1px solid #404040;border-right:1px solid #808080;"></div>
<div style="position:absolute;left:183px;top:323px;width:141px;height:12px;background:#0000f0;"></div>
<div style="position:absolute;left:360.2px;top:324.5px;white-space:pre;font:bold 10px 'Liberation Sans';line-height:1;color:#000;transform:scaleX(0.85);transform-origin:0 0;">38%</div>
<div style="position:absolute;left:266.3px;top:335px;white-space:pre;font:bold 11px 'Liberation Serif';line-height:1;color:#000;transform:scaleX(1.0354609929078014);transform-origin:0 0;">Ошибки:-/-</div>
<svg style="position:absolute;left:559.3px;top:41.4px" width="12" height="12" viewBox="0 0 12 12"><path d="M9.4 2.6 A4.8 4.8 0 0 0 2.6 9.4" stroke="#707070" stroke-width="1.1" fill="none"/><circle cx="6" cy="6" r="3.9" fill="#fff"/></svg>
<div style="position:absolute;left:573.5px;top:41.5px;white-space:pre;font:bold 10px 'Liberation Sans';line-height:1;color:#40d8d8;">1</div>
<svg style="position:absolute;left:559.3px;top:59.4px" width="12" height="12" viewBox="0 0 12 12"><path d="M9.4 2.6 A4.8 4.8 0 0 0 2.6 9.4" stroke="#707070" stroke-width="1.1" fill="none"/><circle cx="6" cy="6" r="3.9" fill="#fff"/></svg>
<div style="position:absolute;left:573.5px;top:59.5px;white-space:pre;font:bold 10px 'Liberation Sans';line-height:1;color:#e03838;">2</div>
<svg style="position:absolute;left:559.3px;top:77.4px" width="12" height="12" viewBox="0 0 12 12"><path d="M9.4 2.6 A4.8 4.8 0 0 0 2.6 9.4" stroke="#707070" stroke-width="1.1" fill="none"/><circle cx="6" cy="6" r="3.9" fill="#fff"/></svg>
<div style="position:absolute;left:573.5px;top:77.5px;white-space:pre;font:bold 10px 'Liberation Sans';line-height:1;color:#3a9a3a;">3</div>
<svg style="position:absolute;left:559.3px;top:95.4px" width="12" height="12" viewBox="0 0 12 12"><path d="M9.4 2.6 A4.8 4.8 0 0 0 2.6 9.4" stroke="#707070" stroke-width="1.1" fill="none"/><circle cx="6" cy="6" r="3.9" fill="#fff"/></svg>
<div style="position:absolute;left:573.5px;top:95.5px;white-space:pre;font:bold 10px 'Liberation Sans';line-height:1;color:#e040e0;">4</div>
<svg style="position:absolute;left:559.3px;top:113.4px" width="12" height="12" viewBox="0 0 12 12"><path d="M9.4 2.6 A4.8 4.8 0 0 0 2.6 9.4" stroke="#707070" stroke-width="1.1" fill="none"/><circle cx="6" cy="6" r="3.9" fill="#fff"/><circle cx="6" cy="6" r="1.5" fill="#000"/></svg>
<div style="position:absolute;left:573.5px;top:113.5px;white-space:pre;font:bold 10px 'Liberation Sans';line-height:1;color:#58e058;">5</div>
<svg style="position:absolute;left:559.3px;top:131.4px" width="12" height="12" viewBox="0 0 12 12"><path d="M9.4 2.6 A4.8 4.8 0 0 0 2.6 9.4" stroke="#707070" stroke-width="1.1" fill="none"/><circle cx="6" cy="6" r="3.9" fill="#fff"/></svg>
<div style="position:absolute;left:573.5px;top:131.5px;white-space:pre;font:bold 10px 'Liberation Sans';line-height:1;color:#3030d0;">6</div>
<svg style="position:absolute;left:559.3px;top:149.4px" width="12" height="12" viewBox="0 0 12 12"><path d="M9.4 2.6 A4.8 4.8 0 0 0 2.6 9.4" stroke="#707070" stroke-width="1.1" fill="none"/><circle cx="6" cy="6" r="3.9" fill="#fff"/></svg>
<div style="position:absolute;left:573.5px;top:149.5px;white-space:pre;font:bold 10px 'Liberation Sans';line-height:1;color:#3a9898;">7</div>
<svg style="position:absolute;left:559.3px;top:167.4px" width="12" height="12" viewBox="0 0 12 12"><path d="M9.4 2.6 A4.8 4.8 0 0 0 2.6 9.4" stroke="#707070" stroke-width="1.1" fill="none"/><circle cx="6" cy="6" r="3.9" fill="#fff"/></svg>
<div style="position:absolute;left:573.5px;top:167.5px;white-space:pre;font:bold 10px 'Liberation Sans';line-height:1;color:#9a309a;">8</div>
<div style="position:absolute;left:560.4px;top:188.8px;white-space:pre;font:bold 11px 'Liberation Serif';line-height:1;color:#000;transform:scaleX(0.91);transform-origin:0 0;">Ось X</div>
<div style="position:absolute;left:560.4px;top:248.5px;white-space:pre;font:bold 11px 'Liberation Serif';line-height:1;color:#000;transform:scaleX(0.8766666666666667);transform-origin:0 0;">Ось Y</div>
<div style="position:absolute;left:566px;top:201px;width:20px;height:21px;background:#d5d2c9;box-sizing:border-box;border-top:1px solid #fff;border-left:1px solid #fff;border-right:1px solid #404040;border-bottom:1px solid #404040;"><div style="position:absolute;left:0;top:0;right:0;bottom:0;border-right:1px solid #808080;border-bottom:1px solid #808080;"></div></div>
<svg style="position:absolute;left:569px;top:204px" width="14" height="14" viewBox="-7 -7 14 14"><defs><radialGradient id="gplus576211" cx="0.5" cy="0.5" r="0.5"><stop offset="0" stop-color="#f4fcff"/><stop offset="0.65" stop-color="#c4e6f8"/><stop offset="1" stop-color="#7ab4dc"/></radialGradient></defs><circle cx="0" cy="0" r="6" fill="url(#gplus576211)"/><path d="M-3 0 H3 M0 -3 V3" stroke="#4a80b8" stroke-width="1.2"/></svg>
<div style="position:absolute;left:566px;top:225px;width:20px;height:21px;background:#d5d2c9;box-sizing:border-box;border-top:1px solid #fff;border-left:1px solid #fff;border-right:1px solid #404040;border-bottom:1px solid #404040;"><div style="position:absolute;left:0;top:0;right:0;bottom:0;border-right:1px solid #808080;border-bottom:1px solid #808080;"></div></div>
<svg style="position:absolute;left:569px;top:228px" width="14" height="14" viewBox="-7 -7 14 14"><defs><radialGradient id="gminus576235" cx="0.5" cy="0.5" r="0.5"><stop offset="0" stop-color="#f4fcff"/><stop offset="0.65" stop-color="#c4e6f8"/><stop offset="1" stop-color="#7ab4dc"/></radialGradient></defs><circle cx="0" cy="0" r="6" fill="url(#gminus576235)"/><path d="M-3 0 H3" stroke="#4a80b8" stroke-width="1.2"/></svg>
<div style="position:absolute;left:566px;top:262px;width:20px;height:20px;background:#d5d2c9;box-sizing:border-box;border-top:1px solid #fff;border-left:1px solid #fff;border-right:1px solid #404040;border-bottom:1px solid #404040;"><div style="position:absolute;left:0;top:0;right:0;bottom:0;border-right:1px solid #808080;border-bottom:1px solid #808080;"></div></div>
<svg style="position:absolute;left:569px;top:265px" width="14" height="14" viewBox="-7 -7 14 14"><defs><radialGradient id="gplus576272" cx="0.5" cy="0.5" r="0.5"><stop offset="0" stop-color="#f4fcff"/><stop offset="0.65" stop-color="#c4e6f8"/><stop offset="1" stop-color="#7ab4dc"/></radialGradient></defs><circle cx="0" cy="0" r="6" fill="url(#gplus576272)"/><path d="M-3 0 H3 M0 -3 V3" stroke="#4a80b8" stroke-width="1.2"/></svg>
<div style="position:absolute;left:566px;top:286px;width:20px;height:21px;background:#d5d2c9;box-sizing:border-box;border-top:1px solid #fff;border-left:1px solid #fff;border-right:1px solid #404040;border-bottom:1px solid #404040;"><div style="position:absolute;left:0;top:0;right:0;bottom:0;border-right:1px solid #808080;border-bottom:1px solid #808080;"></div></div>
<svg style="position:absolute;left:569px;top:289px" width="14" height="14" viewBox="-7 -7 14 14"><defs><radialGradient id="gminus576296" cx="0.5" cy="0.5" r="0.5"><stop offset="0" stop-color="#f4fcff"/><stop offset="0.65" stop-color="#c4e6f8"/><stop offset="1" stop-color="#7ab4dc"/></radialGradient></defs><circle cx="0" cy="0" r="6" fill="url(#gminus576296)"/><path d="M-3 0 H3" stroke="#4a80b8" stroke-width="1.2"/></svg>
<div style="position:absolute;left:560px;top:317px;width:28px;height:28px;background:#d5d2c9;box-sizing:border-box;border-top:1px solid #fff;border-left:1px solid #fff;border-right:1px solid #404040;border-bottom:1px solid #404040;"><div style="position:absolute;left:0;top:0;right:0;bottom:0;border-right:1px solid #808080;border-bottom:1px solid #808080;"></div></div>
<svg style="position:absolute;left:560px;top:317px" width="28" height="28" viewBox="0 0 28 28"><defs><linearGradient id="dg" x1="0" x2="1"><stop offset="0" stop-color="#404c90"/><stop offset="0.5" stop-color="#8a78a8"/><stop offset="1" stop-color="#a88c98"/></linearGradient><linearGradient id="pg" x1="0" x2="1"><stop offset="0" stop-color="#c0a0b0"/><stop offset="1" stop-color="#b08890"/></linearGradient></defs><rect x="7" y="3" width="15.4" height="18.7" fill="url(#dg)"/><rect x="7" y="3" width="15.4" height="1" fill="#383848"/><path d="M12.5 5 L22.4 4 V21.5 L13 25 Z" fill="url(#pg)" opacity="0.9"/><path d="M13 25 L22.4 21.3" stroke="#302028" stroke-width="1"/><path d="M2.7 11 Q2.5 9.8 4 9.8 H6.5 V8.2 L11.5 12.8 L6.5 16.2 V15 H4 Q2.7 15 2.7 13.6 Z" fill="#e80000"/></svg>
</body></html>
